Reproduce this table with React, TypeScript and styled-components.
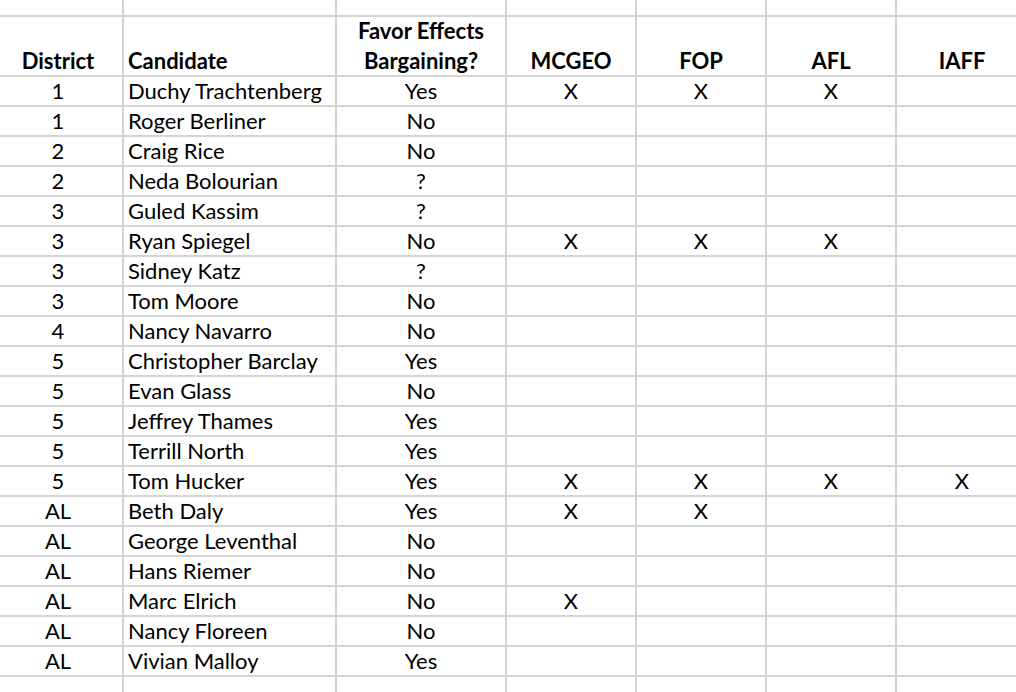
import React from "react";
import styled, { createGlobalStyle } from "styled-components";

const Global = createGlobalStyle`
  html, body { margin: 0; padding: 0; background: #fff; overflow: hidden; }
  body { font-family: Lato, "Open Sans", sans-serif; color: #000; }
`;

const Sheet = styled.div`
  display: grid;
  grid-template-columns: 128px 211px 168px 128px 128px 128px 130px;
  grid-auto-rows: 28px;
  grid-template-rows: 15px 58px;
  gap: 2px;
  background: #d4d4d4;
  margin-left: -6px;
  width: max-content;
`;

const Cell = styled.div<{ $align?: "left" | "center" }>`
  background: #fff;
  display: flex;
  align-items: center;
  justify-content: ${(p) => (p.$align === "left" ? "flex-start" : "center")};
  padding-left: ${(p) => (p.$align === "left" ? "4px" : "0")};
  text-align: ${(p) => (p.$align === "left" ? "left" : "center")};
  font-size: 22px;
  line-height: 28px;
  white-space: nowrap;
  overflow: hidden;
`;

const HeadCell = styled(Cell)`
  align-items: flex-end;
  font-weight: 700;
  line-height: 30px;
`;

const HeadText = styled.span`
  margin-bottom: -1px;
`;

const rows: [string, string, string, boolean, boolean, boolean, boolean][] = [
  ["1", "Duchy Trachtenberg", "Yes", true, true, true, false],
  ["1", "Roger Berliner", "No", false, false, false, false],
  ["2", "Craig Rice", "No", false, false, false, false],
  ["2", "Neda Bolourian", "?", false, false, false, false],
  ["3", "Guled Kassim", "?", false, false, false, false],
  ["3", "Ryan Spiegel", "No", true, true, true, false],
  ["3", "Sidney Katz", "?", false, false, false, false],
  ["3", "Tom Moore", "No", false, false, false, false],
  ["4", "Nancy Navarro", "No", false, false, false, false],
  ["5", "Christopher Barclay", "Yes", false, false, false, false],
  ["5", "Evan Glass", "No", false, false, false, false],
  ["5", "Jeffrey Thames", "Yes", false, false, false, false],
  ["5", "Terrill North", "Yes", false, false, false, false],
  ["5", "Tom Hucker", "Yes", true, true, true, true],
  ["AL", "Beth Daly", "Yes", true, true, false, false],
  ["AL", "George Leventhal", "No", false, false, false, false],
  ["AL", "Hans Riemer", "No", false, false, false, false],
  ["AL", "Marc Elrich", "No", true, false, false, false],
  ["AL", "Nancy Floreen", "No", false, false, false, false],
  ["AL", "Vivian Malloy", "Yes", false, false, false, false],
];

const heads = ["District", "Candidate", "", "MCGEO", "FOP", "AFL", "IAFF"];

export default function App() {
  return (
    <>
      <Global />
      <Sheet>
        {Array.from({ length: 7 }).map((_, i) => (
          <Cell key={"top" + i} />
        ))}
        {heads.map((h, i) => (
          <HeadCell key={"h" + i} $align={i === 1 ? "left" : "center"}>
            <HeadText>
              {i === 2 ? (
                <>
                  Favor Effects
                  <br />
                  Bargaining?
                </>
              ) : (
                h
              )}
            </HeadText>
          </HeadCell>
        ))}
        {rows.map((r, i) => (
          <React.Fragment key={i}>
            <Cell>{r[0]}</Cell>
            <Cell $align="left">{r[1]}</Cell>
            <Cell>{r[2]}</Cell>
            <Cell>{r[3] ? "X" : ""}</Cell>
            <Cell>{r[4] ? "X" : ""}</Cell>
            <Cell>{r[5] ? "X" : ""}</Cell>
            <Cell>{r[6] ? "X" : ""}</Cell>
          </React.Fragment>
        ))}
        {Array.from({ length: 7 }).map((_, i) => (
          <Cell key={"end" + i} />
        ))}
      </Sheet>
    </>
  );
}
